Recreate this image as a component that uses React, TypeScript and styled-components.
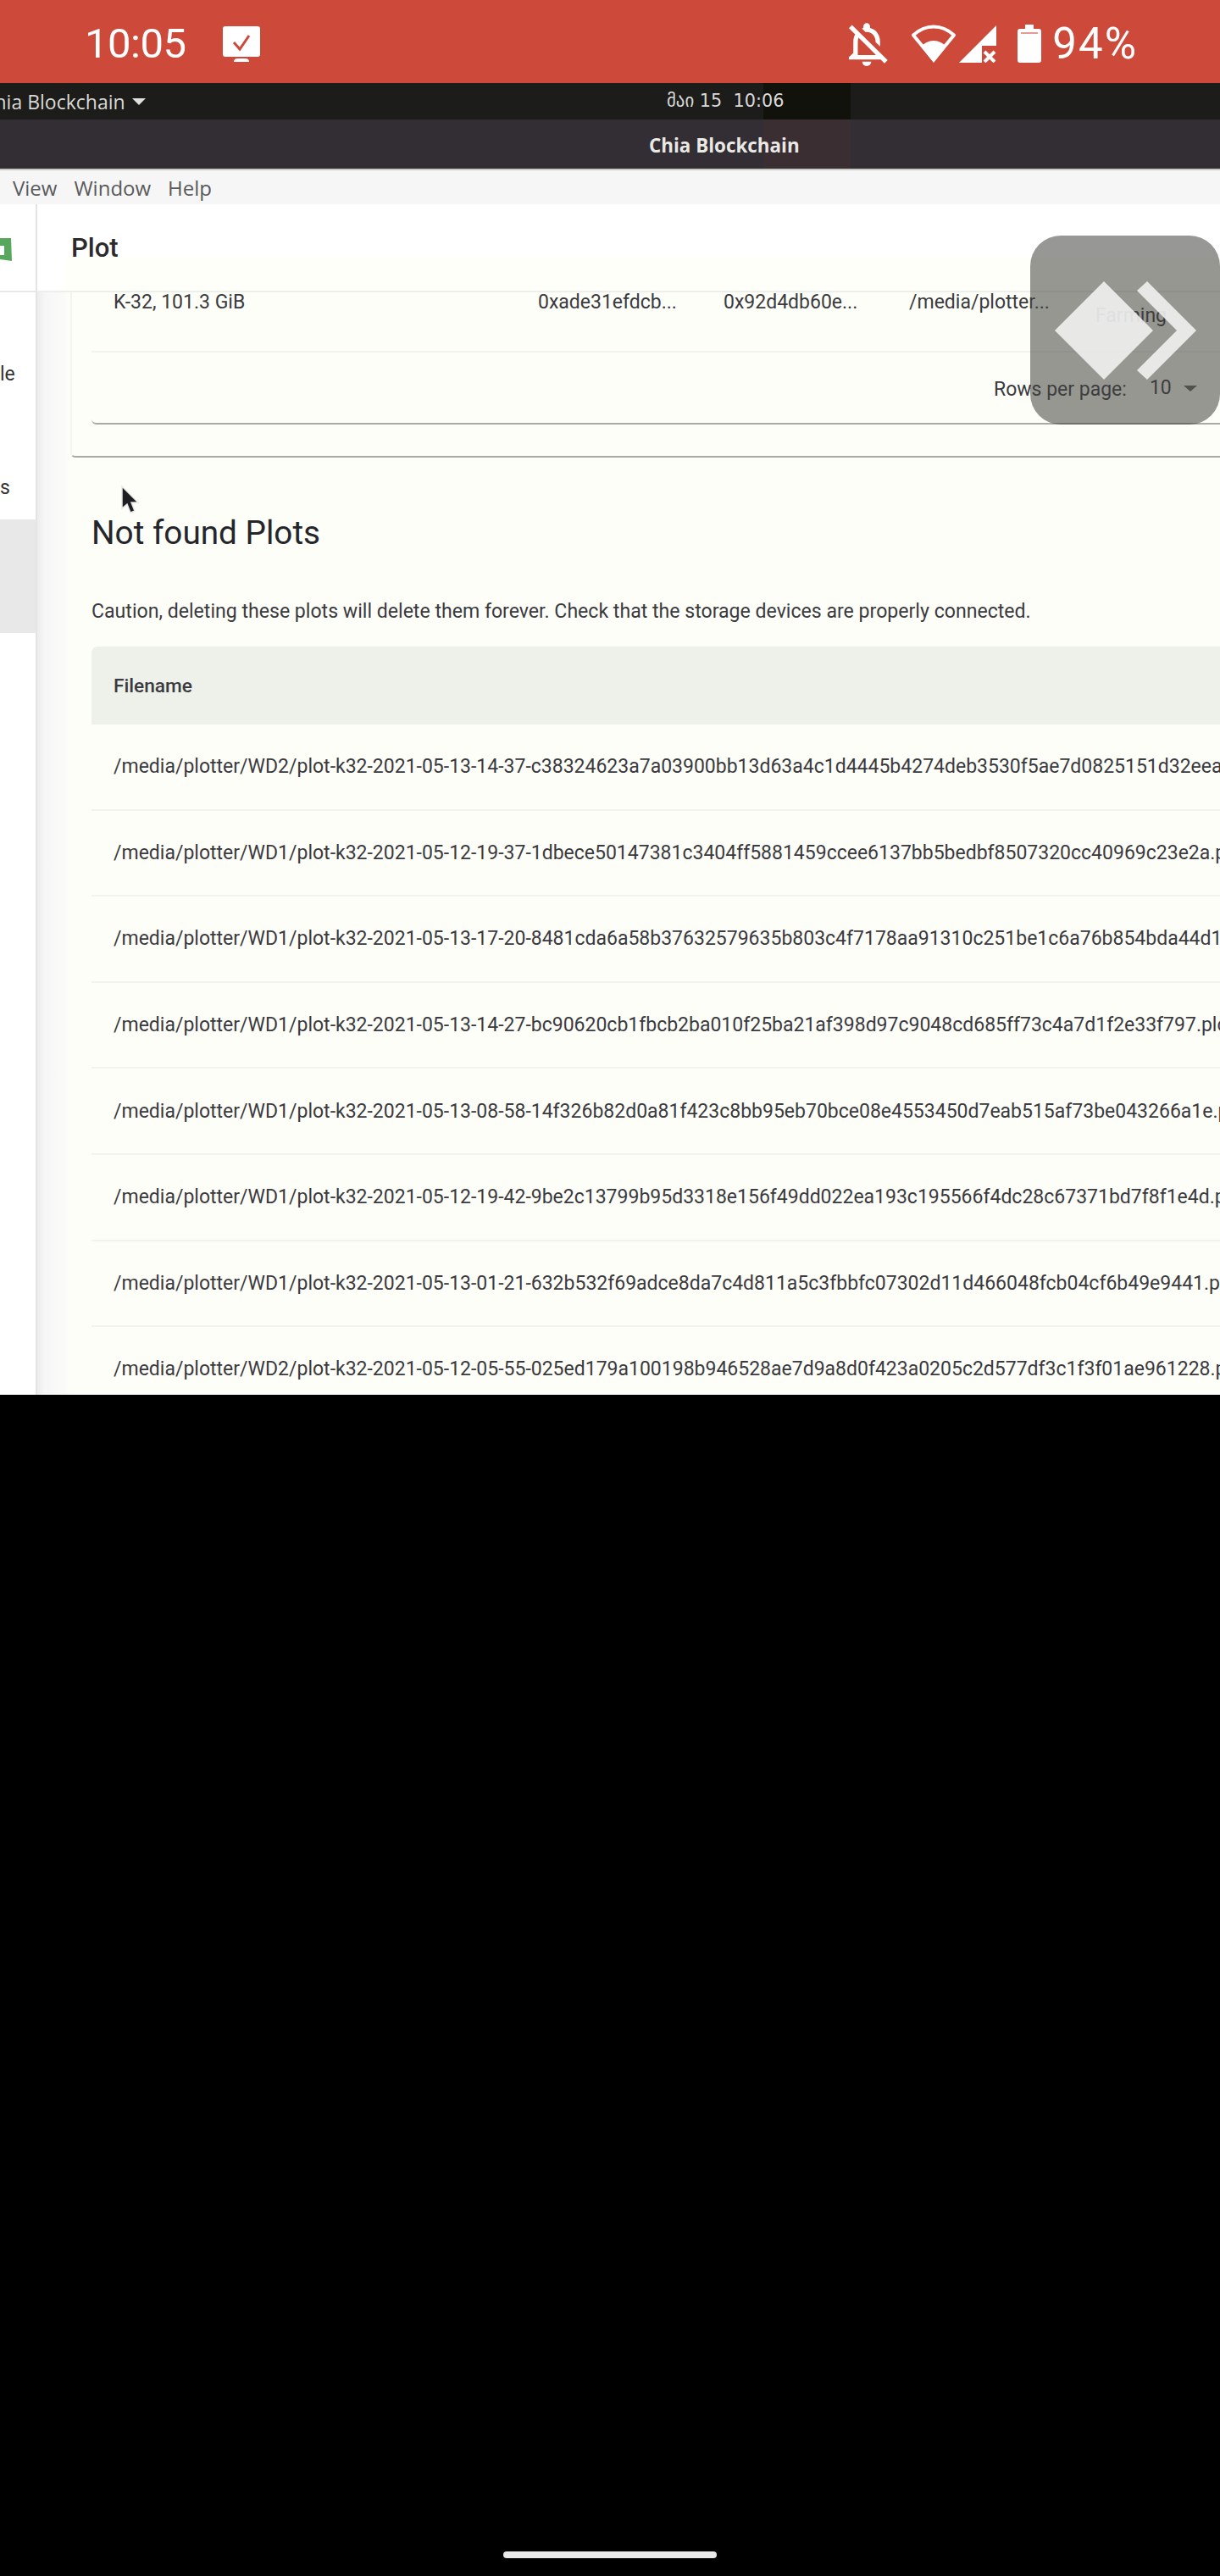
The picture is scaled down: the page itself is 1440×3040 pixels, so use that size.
import React from "react";
import styled, { createGlobalStyle } from "styled-components";

const Global = createGlobalStyle`
  html, body { margin: 0; padding: 0; background: #000; overflow: hidden; }
  * { box-sizing: border-box; }
`;

const Screen = styled.div`
  position: relative;
  width: 1440px;
  height: 3040px;
  overflow: hidden;
  background: #000;
  display: flex;
  flex-direction: column;
  font-family: Roboto, "Liberation Sans", sans-serif;
`;

const StatusBar = styled.div`
  height: 98px;
  flex: none;
  background: #cd4a3b;
  color: #fff;
  display: flex;
  align-items: center;
  padding: 5px 97px 0 100px;
  font-size: 49px;
`;
const StatusIcons = styled.div`
  margin-left: auto;
  display: flex;
  align-items: center;
`;
const Clock = styled.span`
  letter-spacing: -0.5px;
  margin-right: 43px;
`;
const Percent = styled.span`
  margin-left: 13px;
  font-size: 51px;
  letter-spacing: 2px;
`;

const TopBar = styled.div`
  height: 43px;
  flex: none;
  background: linear-gradient(to right, #1c1c1a 901px, #11120c 901px 1004px, #1c1c1a 1004px);
  color: #d9d9d6;
  font-family: "Open Sans", "DejaVu Sans", sans-serif;
  font-size: 23px;
  display: grid;
  grid-template-columns: 787px 1fr;
  align-items: center;
`;
const AppMenu = styled.div`
  display: flex;
  align-items: center;
  gap: 8px;
  margin-left: -21px;
  white-space: nowrap;
`;
const Caret = styled.i<{ $color: string; $w: number; $h: number }>`
  display: inline-block;
  width: 0;
  height: 0;
  border-left: ${(p) => p.$w}px solid transparent;
  border-right: ${(p) => p.$w}px solid transparent;
  border-top: ${(p) => p.$h}px solid ${(p) => p.$color};
`;
const DateText = styled.span`
  font-family: "DejaVu Sans", sans-serif;
  font-size: 20.8px;
  white-space: pre;
  margin-top: -2px;
`;

const TitleBar = styled.div`
  height: 60px;
  flex: none;
  background: linear-gradient(to right, #322e33 901px, #3b2e33 901px 1004px, #322e33 1004px);
  border-bottom: 2px solid #c9c9c5;
  color: #e9e9e6;
  font-family: "Open Sans", "DejaVu Sans", sans-serif;
  font-weight: 700;
  font-size: 22.4px;
  display: flex;
  align-items: center;
  padding: 2px 0 0 766px;
`;

const MenuBar = styled.div`
  height: 40px;
  flex: none;
  background: #f6f6f6;
  color: #5a5a5c;
  font-family: "Open Sans", "DejaVu Sans", sans-serif;
  font-size: 24px;
  display: flex;
  align-items: center;
  gap: 20px;
  padding-left: 15px;
`;

const Body = styled.div`
  height: 1405px;
  flex: none;
  display: grid;
  grid-template-columns: 44px 1fr;
  overflow: hidden;
  background: #fff;
`;

const Sidebar = styled.aside`
  background: #fff;
  border-right: 2px solid #e4e4e4;
  display: flex;
  flex-direction: column;
`;
const LogoBox = styled.div`
  height: 104px;
  border-bottom: 2px solid #e8e8e8;
  padding-top: 40px;
`;
const NavItem = styled.div<{ $active?: boolean }>`
  height: 134px;
  display: flex;
  justify-content: flex-start;
  align-items: flex-end;
  padding-bottom: 24px;
  font-size: 23px;
  color: #333;
  background: ${(p) => (p.$active ? "#e8e8e8" : "transparent")};
`;

const Main = styled.main`
  min-width: 0;
  display: flex;
  flex-direction: column;
`;
const AppBar = styled.header`
  height: 104px;
  flex: none;
  padding-left: 40px;
  display: flex;
  align-items: center;
  font-size: 31px;
  font-weight: 500;
  color: #2b2b2b;
  border-bottom: 2px solid #edf0ea;
  background: linear-gradient(#fffff9, #fffff9) no-repeat 34px 62px #fff;
`;
const Content = styled.div`
  flex: 1;
  min-height: 0;
  overflow: hidden;
  padding-left: 39px;
  background: linear-gradient(to right, #ececec 0, #f6f6f6 8px, #fbfbfa 34px, #fefef8 38px);
  color: #3a3a40;
  font-size: 23px;
`;

const TopCard = styled.section`
  margin-top: -46px;
  height: 241px;
  padding-left: 23px;
  background: #fefef8;
  border-left: 2px solid #f3f5ef;
  border-bottom: 2px solid #a8aaa5;
  border-bottom-left-radius: 6px;
  white-space: nowrap;
`;
const PlotRow = styled.div`
  height: 117px;
  display: grid;
  grid-template-columns: 501px 219px 219px 220px 1fr;
  align-items: center;
  padding-left: 26px;
  border-bottom: 2px solid #f1f3ee;
`;
const FarmingChip = styled.span`
  padding-top: 32px;
`;
const Pagination = styled.div`
  height: 85px;
  display: flex;
  align-items: center;
  padding: 4px 0 0 1065px;
  border-bottom: 2px solid #a8aaa5;
  border-bottom-left-radius: 6px;
`;
const RowsValue = styled.span`
  margin-left: 27px;
  margin-top: -4px;
`;
const PageCaret = styled.span`
  display: inline-flex;
  margin-left: 14px;
  margin-top: -2px;
`;

const NotFoundCard = styled.section`
  padding: 64px 0 0 25px;
  background: #fefef8;
  white-space: nowrap;
`;
const Heading = styled.h2`
  margin: 0;
  font-size: 38.7px;
  line-height: 50px;
  font-weight: 400;
  color: #25252c;
`;
const Caution = styled.p`
  margin: 53px 0 0;
  line-height: 30px;
  font-size: 23.1px;
`;
const TableHead = styled.div`
  margin-top: 26px;
  height: 92px;
  padding-left: 26px;
  display: flex;
  align-items: center;
  background: #eef1ea;
  border-top-left-radius: 7px;
  font-size: 22.7px;
  font-weight: 500;
`;
const FileRow = styled.div`
  height: 101.6px;
  padding-left: 26px;
  display: flex;
  align-items: center;
  border-bottom: 2px solid #f1f3ee;
`;

const Tile = styled.div`
  position: absolute;
  left: 1216px;
  top: 278px;
  width: 224px;
  height: 223px;
  border-radius: 36px;
  background: rgba(66, 66, 62, 0.55);
`;
const TileArt = styled.svg`
  display: block;
`;
const Cursor = styled.svg`
  position: absolute;
  left: 141px;
  top: 571px;
`;
const Bottom = styled.div`
  flex: 1;
  display: flex;
  justify-content: center;
  align-items: flex-end;
  padding-bottom: 21px;
`;
const HomeBar = styled.div`
  width: 252px;
  height: 8px;
  border-radius: 4px;
  background: #e8e8e8;
`;

const files = [
  "/media/plotter/WD2/plot-k32-2021-05-13-14-37-c38324623a7a03900bb13d63a4c1d4445b4274deb3530f5ae7d0825151d32eea.plot",
  "/media/plotter/WD1/plot-k32-2021-05-12-19-37-1dbece50147381c3404ff5881459ccee6137bb5bedbf8507320cc40969c23e2a.plot",
  "/media/plotter/WD1/plot-k32-2021-05-13-17-20-8481cda6a58b37632579635b803c4f7178aa91310c251be1c6a76b854bda44d1.plot",
  "/media/plotter/WD1/plot-k32-2021-05-13-14-27-bc90620cb1fbcb2ba010f25ba21af398d97c9048cd685ff73c4a7d1f2e33f797.plot",
  "/media/plotter/WD1/plot-k32-2021-05-13-08-58-14f326b82d0a81f423c8bb95eb70bce08e4553450d7eab515af73be043266a1e.plot",
  "/media/plotter/WD1/plot-k32-2021-05-12-19-42-9be2c13799b95d3318e156f49dd022ea193c195566f4dc28c67371bd7f8f1e4d.plot",
  "/media/plotter/WD1/plot-k32-2021-05-13-01-21-632b532f69adce8da7c4d811a5c3fbbfc07302d11d466048fcb04cf6b49e9441.plot",
  "/media/plotter/WD2/plot-k32-2021-05-12-05-55-025ed179a100198b946528ae7d9a8d0f423a0205c2d577df3c1f3f01ae961228.plot",
];

const MonitorIcon = () => (
  <svg width="44" height="42" viewBox="0 0 44 42">
    <rect x="0" y="0" width="44" height="36" rx="3" fill="#fff" />
    <path d="M13 19l7 8L31 11" fill="none" stroke="#cd4a3b" strokeWidth="3" />
    <path d="M13 42c0-3 2-4 4-4h10c2 0 4 1 4 4z" fill="#fff" />
  </svg>
);
const BellOffIcon = () => (
  <svg width="50" height="52" viewBox="2.5 2 19 20" preserveAspectRatio="none" style={{ marginRight: 27 }}>
    <path
      fill="#fff"
      d="M12 22c1.1 0 2-.9 2-2h-4c0 1.1.9 2 2 2zm0-15.5c2.49 0 4 2.02 4 4.5v.1l2 2V11c0-3.07-1.63-5.64-4.5-6.32V4c0-.83-.67-1.5-1.5-1.5s-1.5.67-1.5 1.5v.68c-.24.06-.47.15-.69.23l1.64 1.64c.18-.02.36-.05.55-.05zM5.41 3.35L4 4.76l2.81 2.81C6.29 8.57 6 9.74 6 11v5l-2 2v1h14.24l1.74 1.74 1.41-1.41L5.41 3.35zM16 17H8v-6c0-.68.12-1.32.34-1.9L16 16.76V17z"
    />
  </svg>
);
const WifiIcon = () => (
  <svg width="54" height="46" viewBox="0 0 54 46" style={{ marginRight: 3 }}>
    <path d="M27 41.5L3 12.5C10 6 18 2.5 27 2.5s17 3.5 24 10z" fill="none" stroke="#fff" strokeWidth="4" strokeLinejoin="round" />
    <path d="M27 45L12 26c4-4 9-7 15-7s11 3 15 7z" fill="#fff" />
  </svg>
);
const SignalIcon = () => (
  <svg width="44" height="44" viewBox="0 0 44 44" style={{ marginRight: 25 }}>
    <path d="M44 0V24H27V44H0z" fill="#fff" />
    <path d="M30 31l12 12M42 31L30 43" stroke="#fff" strokeWidth="4" fill="none" />
  </svg>
);
const BatteryIcon = () => (
  <svg width="28" height="45" viewBox="0 0 28 45">
    <path d="M9 0h10v5h6a3 3 0 0 1 3 3v34a3 3 0 0 1-3 3H3a3 3 0 0 1-3-3V8a3 3 0 0 1 3-3h6z" fill="#fff" />
    <rect x="4" y="9" width="20" height="2" fill="#e79a90" />
  </svg>
);
const LogoMark = () => (
  <svg width="15" height="28" viewBox="0 0 15 28">
    <path d="M0 0H13L14 27L0 25V20H5V9H0z" fill="#57a85c" />
  </svg>
);

export default function App() {
  return (
    <Screen>
      <Global />
      <StatusBar>
        <Clock>10:05</Clock>
        <MonitorIcon />
        <StatusIcons>
          <BellOffIcon />
          <WifiIcon />
          <SignalIcon />
          <BatteryIcon />
          <Percent>94%</Percent>
        </StatusIcons>
      </StatusBar>
      <TopBar>
        <AppMenu>
          Chia Blockchain <Caret $color="#e0e0dd" $w={8} $h={8} />
        </AppMenu>
        <DateText>მაი 15  10:06</DateText>
      </TopBar>
      <TitleBar>Chia Blockchain</TitleBar>
      <MenuBar>
        <span>View</span>
        <span>Window</span>
        <span>Help</span>
      </MenuBar>
      <Body>
        <Sidebar>
          <LogoBox>
            <LogoMark />
          </LogoBox>
          <NavItem>le</NavItem>
          <NavItem>s</NavItem>
          <NavItem $active />
        </Sidebar>
        <Main>
          <AppBar>Plot</AppBar>
          <Content>
            <TopCard>
              <PlotRow>
                <span>K-32, 101.3 GiB</span>
                <span>0xade31efdcb...</span>
                <span>0x92d4db60e...</span>
                <span>/media/plotter...</span>
                <FarmingChip>Farming</FarmingChip>
              </PlotRow>
              <Pagination>
                <span>Rows per page:</span>
                <RowsValue>10</RowsValue>
                <PageCaret>
                  <Caret $color="#66665f" $w={8} $h={7} />
                </PageCaret>
              </Pagination>
            </TopCard>
            <NotFoundCard>
              <Heading>Not found Plots</Heading>
              <Caution>
                Caution, deleting these plots will delete them forever. Check that the storage devices are properly connected.
              </Caution>
              <TableHead>Filename</TableHead>
              {files.map((f) => (
                <FileRow key={f}>{f}</FileRow>
              ))}
            </NotFoundCard>
          </Content>
        </Main>
      </Body>
      <Bottom>
        <HomeBar />
      </Bottom>
      <Tile>
        <TileArt width="224" height="223" viewBox="0 0 224 223">
          <path d="M87 54L145 112L87 170L29 112z" fill="rgba(241,241,241,0.9)" />
          <path d="M138 54L196 112L138 170L126 159L173 112L126 65z" fill="rgba(241,241,241,0.9)" />
        </TileArt>
      </Tile>
      <Cursor width="24" height="38" viewBox="0 0 24 38">
        <path d="M3 3V29L9 24L13 34L18 32L14 22H22z" fill="#1f1f22" stroke="#e8e8e8" strokeWidth="1.5" />
      </Cursor>
    </Screen>
  );
}
